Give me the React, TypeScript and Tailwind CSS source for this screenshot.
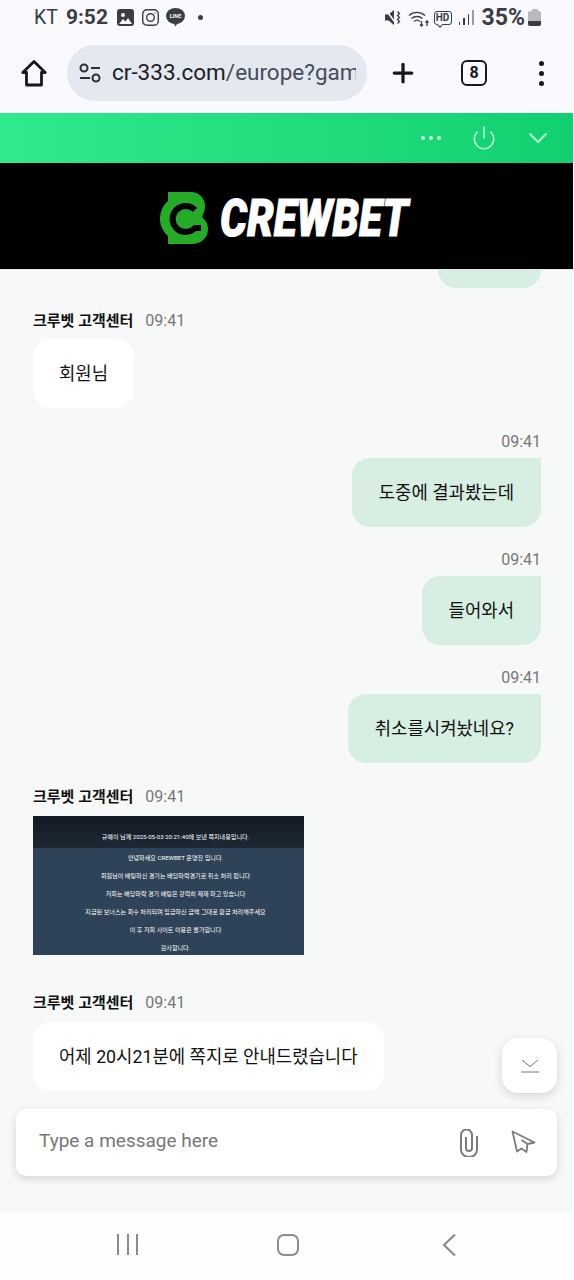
import { Plus, Power, ChevronDown } from "lucide-react";

const AGENT = "크루벳 고객센터";
const TIME = "09:41";

function ImageIcon() {
  return (
    <svg width="17" height="17" viewBox="0 0 17 17">
      <rect width="17" height="17" rx="3" fill="#3a3d44" />
      <circle cx="6" cy="6" r="2" fill="#f9f9fe" />
      <path d="M2 15l4-5 2.5 2.5L11 9l4 6z" fill="#f9f9fe" />
    </svg>
  );
}

function InstagramIcon() {
  return (
    <svg width="17" height="17" viewBox="0 0 17 17" fill="none" stroke="#3a3d44" strokeWidth="1.4">
      <rect x="0.7" y="0.7" width="15.6" height="15.6" rx="4.2" />
      <circle cx="8.5" cy="8.5" r="3.8" />
      <circle cx="13" cy="4" r="0.7" fill="#3a3d44" stroke="none" />
    </svg>
  );
}

function LineIcon() {
  return (
    <svg width="19" height="19" viewBox="0 0 19 19">
      <ellipse cx="9.5" cy="8" rx="9.5" ry="8" fill="#3a3d44" />
      <path d="M8 15h4l-3 3.6z" fill="#3a3d44" />
      <text x="9.5" y="10" textAnchor="middle" fontSize="5.5" fontWeight="700" fill="#f9f9fe" fontFamily="Roboto, sans-serif">LINE</text>
    </svg>
  );
}

function StatusRight() {
  return (
    <div className="flex items-center">
      {/* mute */}
      <svg width="16" height="17" viewBox="0 0 16 17" className="mr-[7px]">
        <path d="M0 5.5h3.5L9 1v15l-5.500-4.500H0z" fill="#3a3d44" />
        <path d="M1 1l11 15" stroke="#f9f9fe" strokeWidth="1.500" />
        <path d="M12.500 2.500l2 2-2 2 2 2-2 2 2 2-2 2" fill="none" stroke="#3a3d44" strokeWidth="1.300" />
      </svg>
      {/* wifi */}
      <svg width="22" height="18" viewBox="0 0 22 18" fill="none" stroke="#3a3d44" strokeWidth="1.300" className="mr-[4px]">
        <path d="M1 6.500a12 12 0 0 1 16 0" />
        <path d="M3.500 9.500a8.500 8.500 0 0 1 11 0" />
        <path d="M6 12.500a4.500 4.500 0 0 1 6 0" />
        <path d="M13.500 12v5M12 15.500l1.500 1.500 1.500-1.500M19 17v-5M17.500 13.500l1.500-1.500 1.500 1.500" />
      </svg>
      {/* HD */}
      <div className="relative mr-[7px] flex h-[14px] w-[18px] items-center justify-center rounded-[3px] border border-[#3a3d44] text-[10px] leading-none font-bold text-[#3a3d44]">
        HD
        <span className="absolute -bottom-[3px] left-[3px] h-[4px] w-[4px] rotate-45 border-r border-b border-[#3a3d44] bg-[#f9f9fe]" />
      </div>
      {/* signal */}
      <div className="mr-[8px] flex h-[15px] w-[15px] items-end gap-[3px]">
        <span className="h-[3px] w-[2px] bg-[#3a3d44]" />
        <span className="h-[7px] w-[2px] bg-[#3a3d44]" />
        <span className="h-[11px] w-[2px] bg-[#3a3d44]" />
        <span className="h-[15px] w-[2px] bg-[#9a9ca2]" />
      </div>
      <span className="mr-[3px] text-[23px] leading-none font-bold text-[#3a3d44]">35%</span>
      {/* battery */}
      <div className="flex w-[13px] flex-col items-center">
        <span className="h-[2px] w-[6px] rounded-t-[1px] bg-[#b8babd]" />
        <div className="flex h-[15px] w-[13px] items-end rounded-[2px] bg-[#b8babd]">
          <span className="h-[5px] w-full rounded-b-[2px] bg-[#3a3d44]" />
        </div>
      </div>
    </div>
  );
}

function StatusBar() {
  return (
    <div className="flex h-[33px] items-center justify-between bg-[#f9f9fe] pt-[2px] pr-[33px] pl-[34px]">
      <div className="flex items-center text-[#3a3d44]">
        <span className="mr-[8px] text-[19.500px] leading-none">KT</span>
        <span className="mr-[9px] text-[21px] leading-none font-bold">9:52</span>
        <span className="mr-[8px]"><ImageIcon /></span>
        <span className="mr-[7px]"><InstagramIcon /></span>
        <LineIcon />
        <span className="ml-[13px] h-[5px] w-[5px] rounded-full bg-[#3a3d44]" />
      </div>
      <StatusRight />
    </div>
  );
}

function BrowserBar() {
  return (
    <div className="flex h-[80px] items-center bg-[#f9f9fe]">
      <svg width="26" height="28" viewBox="0 0 26 28" fill="none" stroke="#16181c" strokeWidth="2.800" strokeLinejoin="round" className="mr-[20px] ml-[21px]">
        <path d="M1.800 13.500L13 2.500l11.200 11H20.500v12.500h-15V13.500z" />
      </svg>
      <div className="flex h-[56px] w-[300px] items-center rounded-[28px] bg-[#e4e8f1] pr-[11px] pl-[12px]">
        <svg width="22" height="20" viewBox="0 0 22 20" fill="none" stroke="#2d3036" strokeWidth="2" className="mr-[11px] shrink-0">
          <circle cx="5" cy="5" r="3.500" />
          <path d="M12 5h9M1 15h10" />
          <circle cx="17" cy="15" r="3.500" />
        </svg>
        <div className="min-w-0 flex-1 overflow-hidden text-[22.500px] leading-normal whitespace-nowrap text-[#474c55]">
          <span className="text-[#1d2026]">cr-333.com</span>/europe?game=live
        </div>
      </div>
      <Plus size={30} strokeWidth={2.600} color="#16181c" className="ml-[21px]" />
      <div className="ml-[43px] flex h-[26px] w-[26px] items-center justify-center rounded-[6px] border-[2.500px] border-[#16181c] text-[16px] leading-none font-bold text-[#16181c]">
        8
      </div>
      <div className="ml-[52px] flex flex-col gap-[5px]">
        <span className="h-[5px] w-[5px] rounded-full bg-[#16181c]" />
        <span className="h-[5px] w-[5px] rounded-full bg-[#16181c]" />
        <span className="h-[5px] w-[5px] rounded-full bg-[#16181c]" />
      </div>
    </div>
  );
}

function GreenHeader() {
  return (
    <div className="flex h-[50px] items-center justify-end bg-gradient-to-r from-[#2eea8c] to-[#10d070] pr-[24px] text-[#b8f5d4]">
      <div className="mr-[30px] flex gap-[4px]">
        <span className="h-[4px] w-[4px] rounded-full bg-[#c8f7de]" />
        <span className="h-[4px] w-[4px] rounded-full bg-[#c8f7de]" />
        <span className="h-[4px] w-[4px] rounded-full bg-[#c8f7de]" />
      </div>
      <Power size={26} strokeWidth={1.500} className="mr-[30px]" />
      <ChevronDown size={32} strokeWidth={1.400} className="-mx-[5px]" />
    </div>
  );
}

function LogoBar() {
  return (
    <div className="flex h-[106px] items-center bg-black pt-[4px] pl-[160px]">
      <svg width="48" height="52" viewBox="0 0 48 52" className="mr-[12px]">
        <path d="M8 0H31A14 14 0 0 1 45 14C45 19 43 22 42 25C45 28 48 31 48 37A15 15 0 0 1 33 52H8V44C3 40 0 33 0 27C0 20 3 13 8 9Z" fill="#25ab28" />
        <path d="M35 18A13 13 0 1 0 35 36L41 36" fill="none" stroke="#000" strokeWidth="6" />
      </svg>
      <span className="w-[191px] origin-left scale-x-[0.83] font-['Roboto',sans-serif] text-[51px] leading-none font-black whitespace-nowrap text-white italic [-webkit-text-stroke:1px_white]">
        CREWBET
      </span>
    </div>
  );
}

function AgentLabel({ className }: { className: string }) {
  return (
    <div className={`flex h-[22px] items-center pt-[2px] ${className}`}>
      <span className="mr-[12px] text-[15px] font-bold text-[#111]">{AGENT}</span>
      <span className="text-[16px] text-[#777]">{TIME}</span>
    </div>
  );
}

function AgentBubble({ text }: { text: string }) {
  return (
    <div className="flex h-[69px] w-fit items-center rounded-[18px] bg-white px-[26px] pt-[2px] text-[17.800px] text-[#111]">
      {text}
    </div>
  );
}

function MyMessage({ text, className }: { text: string; className: string }) {
  return (
    <div className={`flex flex-col items-end ${className}`}>
      <div className="mb-[6px] h-[22px] text-[16px] leading-[24px] text-[#777]">{TIME}</div>
      <div className="flex h-[69px] w-fit items-center rounded-l-[18px] rounded-br-[18px] bg-[#d7eee2] px-[27px] pt-[2px] text-[17.800px] text-[#111]">
        {text}
      </div>
    </div>
  );
}

function Attachment() {
  const lines = [
    "안녕하세요 CREWBET 운영진 입니다.",
    "회원님이 배팅하신 경기는 배당하락경기로 취소 처리 됩니다",
    "저희는 배당하락 경기 배팅은 강력히 제재 하고 있습니다",
    "지급된 보너스는 회수 처리되며 입금하신 금액 그대로 환급 처리해주세요",
    "이 후 저희 사이트 이용은 불가합니다",
    "감사합니다.",
  ];
  return (
    <div className="h-[139px] w-[271px] overflow-hidden bg-[#2f4358] text-center text-[6.100px] text-white">
      <div className="flex h-[32px] items-end justify-center bg-gradient-to-b from-[#131a23] to-[#1d2834] pb-[7px] pl-[14px] leading-[9px]">
        규예이 님께 2025-05-03 20:21:40에 보낸 쪽지내용입니다.
      </div>
      <div className="pt-[1px] pl-[14px]">
        {lines.map((line) => (
          <div key={line} className="h-[18px] leading-[18px]">{line}</div>
        ))}
      </div>
    </div>
  );
}

function Composer() {
  return (
    <div className="px-[16px] pb-[37px]">
      <div className="flex h-[67px] items-center rounded-[10px] bg-white pr-[21px] pl-[23px] shadow-[0_3px_8px_rgba(0,0,0,0.14)]">
        <span className="flex-1 pb-[2px] text-[19px] text-[#777]">Type a message here</span>
        <svg width="18" height="28" viewBox="0 0 18 28" fill="none" stroke="#7c7c7c" strokeWidth="2" className="mr-[33px]">
          <path d="M17 7V21A8 7 0 0 1 1 21V6A5 5 0 0 1 12 6V19A2.800 2.800 0 0 1 6 19V8" />
        </svg>
        <svg width="25" height="25" viewBox="0 0 25 25" fill="none" stroke="#7c7c7c" strokeWidth="1.800" strokeLinejoin="round">
          <path d="M1.500 1.500L23.500 12.500l-7 1.500-1 8-5-3.500-4.500 3z" />
          <path d="M10.500 10l6 4" />
        </svg>
      </div>
    </div>
  );
}

function NavBar() {
  return (
    <div className="flex h-[67px] items-center bg-[#fefefe] pb-[4px]">
      <div className="ml-[117px] flex h-[21px] gap-[7.500px]">
        <span className="w-[2px] bg-[#8c8c8c]" />
        <span className="w-[2px] bg-[#8c8c8c]" />
        <span className="w-[2px] bg-[#8c8c8c]" />
      </div>
      <span className="ml-[139px] h-[22px] w-[22px] rounded-[7px] border-[2.500px] border-[#8c8c8c]" />
      <svg width="16" height="24" viewBox="0 0 16 24" fill="none" stroke="#8c8c8c" strokeWidth="2.200" className="ml-[142px]">
        <path d="M14 1.500L3 12l11 10.500" />
      </svg>
    </div>
  );
}

export default function App() {
  return (
    <div className="flex h-[1280px] w-[574px] flex-col overflow-hidden bg-white font-['Roboto','Noto_Sans_CJK_KR',sans-serif]">
      <StatusBar />
      <BrowserBar />
      <div className="flex min-h-0 flex-1 flex-col pr-px">
        <GreenHeader />
        <LogoBar />
        <div className="relative flex min-h-0 flex-1 flex-col border-t border-[#e4e8e6] bg-[#f7f9f9]">
          <div className="min-h-0 flex-1 overflow-hidden pr-[32px] pl-[33px]">
            <div className="-mt-[51px] ml-auto h-[69px] w-[103px] rounded-[18px] bg-[#d7eee2]" />

            <AgentLabel className="mt-[21px] mb-[8px]" />
            <AgentBubble text="회원님" />

            <MyMessage text="도중에 결과봤는데" className="mt-[22px]" />
            <MyMessage text="들어와서" className="mt-[21px]" />
            <MyMessage text="취소를시켜놨네요?" className="mt-[21px]" />

            <AgentLabel className="mt-[22px] mb-[9px]" />
            <Attachment />

            <AgentLabel className="mt-[36px] mb-[9px]" />
            <AgentBubble text="어제 20시21분에 쪽지로 안내드렸습니다" />
          </div>
          <Composer />

          <button className="absolute right-[16px] bottom-[120px] flex h-[55px] w-[55px] items-center justify-center rounded-[16px] bg-white shadow-[0_3px_10px_rgba(0,0,0,0.14)]">
            <svg width="18" height="14" viewBox="0 0 18 14" fill="none" stroke="#777" strokeWidth="1">
              <path d="M1 1l8 6.500L17 1M0 13h18" />
            </svg>
          </button>
        </div>
      </div>
      <NavBar />
    </div>
  );
}
